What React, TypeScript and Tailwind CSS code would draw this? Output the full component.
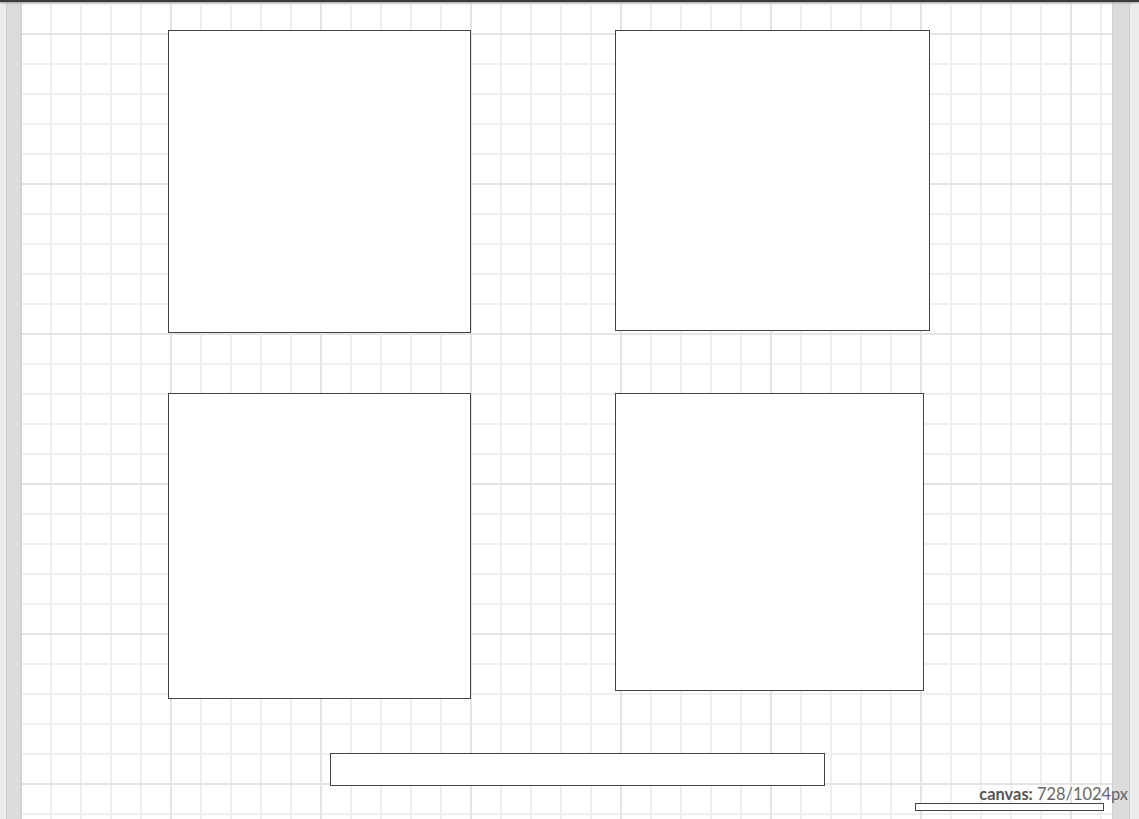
import React from "react";

function Box({ className }: { className: string }) {
  return <div className={`absolute border border-[#444] bg-white ${className}`} />;
}

export default function App() {
  return (
    <div className="relative flex h-[819px] w-full flex-col overflow-hidden bg-[#ececec] font-['Lato','Liberation_Sans',sans-serif]">
      <div className="relative z-10 h-[2px] w-full bg-[#3b3b3b] shadow-[0_1px_2px_rgba(0,0,0,0.35)]" />
      <div className="flex flex-1 pt-[1px]">
        <div className="flex w-[22px] shrink-0">
          <div className="w-[6px] bg-[#ececec]" />
          <div className="w-[1px] bg-[#cfcfcf]" />
          <div className="w-[13px] bg-[#dcdcdc]" />
          <div className="w-[2px] bg-[#d2d2d2]" />
        </div>
        <div className="relative flex-1 bg-white bg-[linear-gradient(to_right,#e4e4e4_2px,transparent_2px),linear-gradient(to_bottom,#e4e4e4_2px,transparent_2px),linear-gradient(to_right,#efefef_2px,transparent_2px),linear-gradient(to_bottom,#efefef_2px,transparent_2px)] bg-[size:150px_150px,150px_150px,30px_30px,30px_30px] bg-[position:148px_0,0_30px,28px_0,0_0]">
          <Box className="left-[146px] top-[27px] h-[303px] w-[303px]" />
          <Box className="left-[593px] top-[27px] h-[301px] w-[315px]" />
          <Box className="left-[146px] top-[390px] h-[306px] w-[303px]" />
          <Box className="left-[593px] top-[390px] h-[298px] w-[309px]" />
          <Box className="left-[308px] top-[750px] h-[33px] w-[495px]" />
        </div>
        <div className="flex w-[27px] shrink-0">
          <div className="w-[1px] bg-[#d2d2d2]" />
          <div className="w-[16px] bg-[#dcdcdc]" />
          <div className="w-[1px] bg-[#cfcfcf]" />
          <div className="w-[9px] bg-[#ececec]" />
        </div>
      </div>
      <div className="absolute right-[11px] top-[784px] text-[16.4px] leading-[20px] text-[#666] whitespace-nowrap">
        <span className="font-bold text-[#555]">canvas:</span> 728/1024px
      </div>
      <div className="absolute left-[915px] top-[803px] h-[8px] w-[189px] border border-[#444] bg-white" />
    </div>
  );
}
